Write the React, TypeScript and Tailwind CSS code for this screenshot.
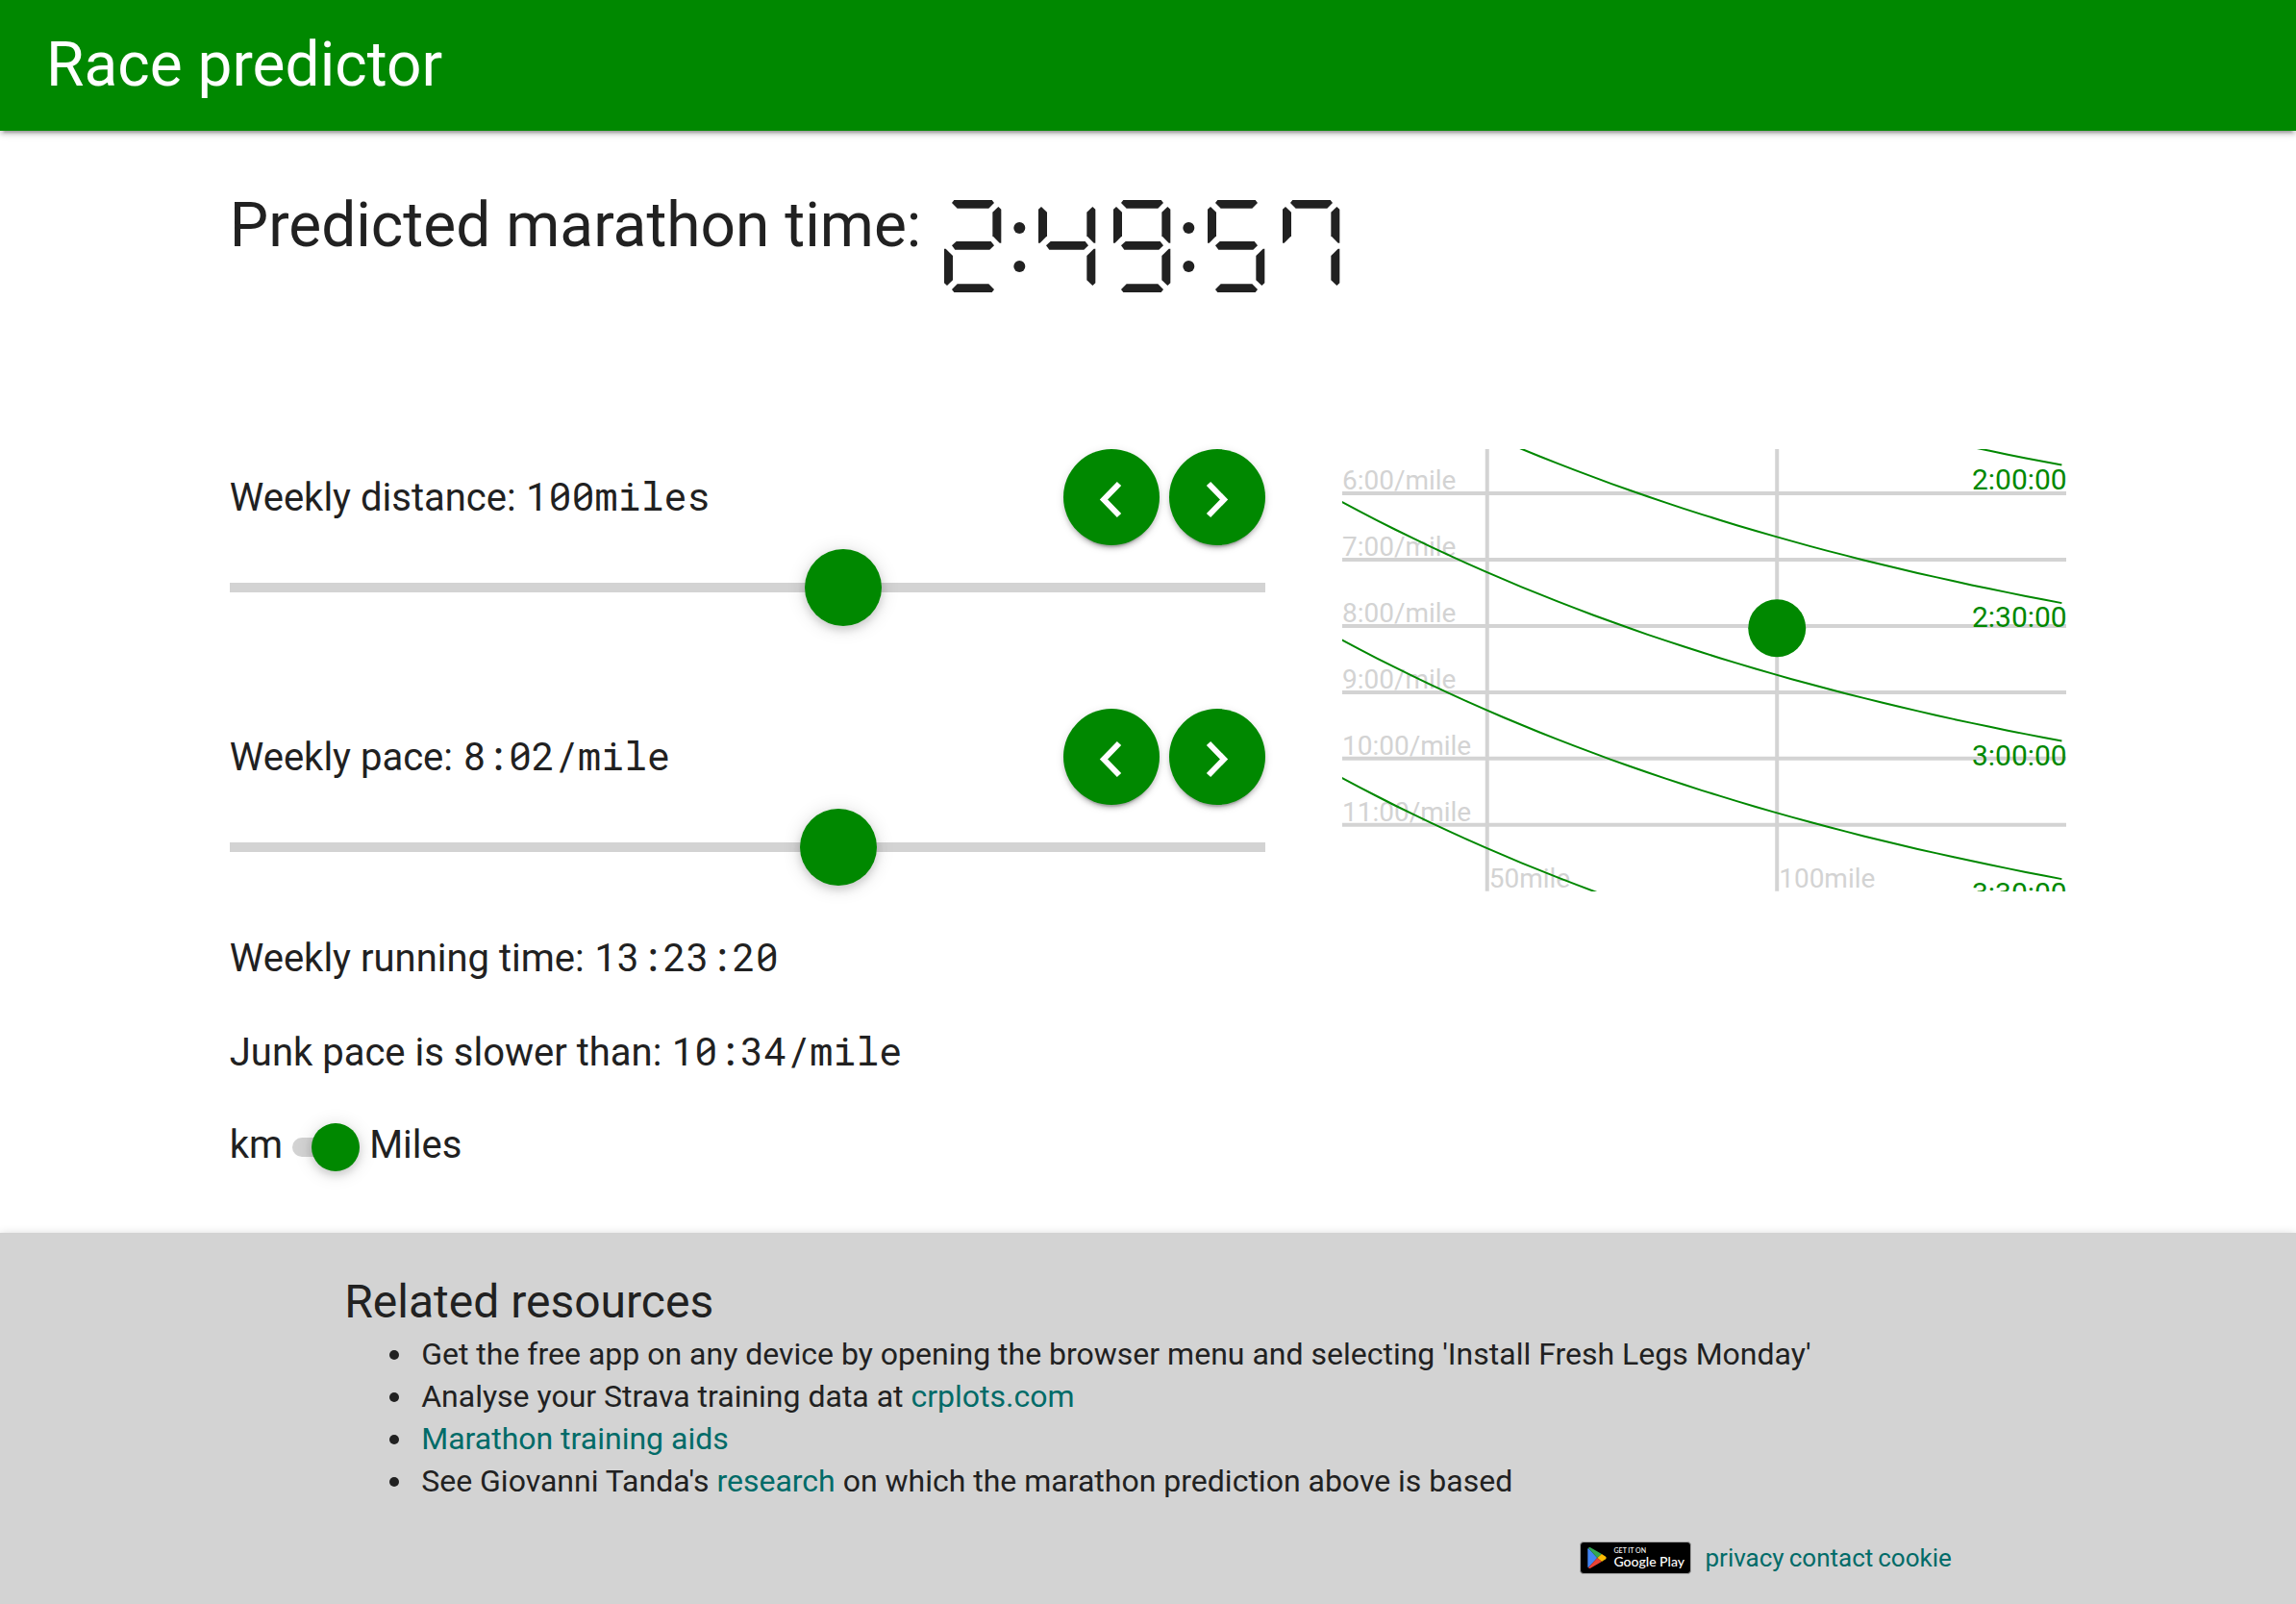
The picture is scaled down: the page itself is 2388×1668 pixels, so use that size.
import React from "react";

const GREEN = "#008800";
const GREY = "#d3d3d3";

/* ---------- Seven-segment clock ---------- */

const SEGMENTS: Record<string, string> = {
  a: "24,9 31,0 149,0 156,9 139,26 41,26",
  b: "169,21 151,38 151,112 173,134 178,134 178,29",
  c: "169,267 151,250 151,174 173,152 178,152 178,259",
  d: "24,279 41,262 139,262 156,279 149,288 31,288",
  e: "9,267 27,250 27,174 5,152 0,152 0,259",
  f: "9,21 27,38 27,112 5,134 0,134 0,29",
  g: "24,142 38,129 146,129 156,142 142,155 34,155",
};

const LIT: Record<string, string> = {
  "0": "abcdef",
  "1": "bc",
  "2": "abged",
  "3": "abgcd",
  "4": "fgbc",
  "5": "afgcd",
  "6": "afgedc",
  "7": "fabc",
  "8": "abcdefg",
  "9": "abcdfg",
};

const DIGIT_ADVANCE = 234;
const COLON_ADVANCE = 60;

function SegmentClock({ value }: { value: string }) {
  let x = 0;
  const parts = value.split("").map((ch, i) => {
    const left = x;
    if (ch === ":") {
      x += COLON_ADVANCE;
      return (
        <g key={i} transform={`translate(${left} 0)`}>
          <circle cx="1" cy="87" r="18" />
          <circle cx="1" cy="207" r="18" />
        </g>
      );
    }
    x += DIGIT_ADVANCE;
    return (
      <g key={i} transform={`translate(${left} 0)`}>
        {LIT[ch].split("").map((s) => (
          <polygon key={s} points={SEGMENTS[s]} />
        ))}
      </g>
    );
  });
  return (
    <svg
      role="img"
      aria-label={value}
      viewBox="0 0 1236 288"
      className="h-24 w-[412px] shrink-0"
      fill="currentColor"
    >
      {parts}
    </svg>
  );
}

/* ---------- Controls ---------- */

function StepButton({ label, d }: { label: string; d: string }) {
  return (
    <button
      type="button"
      aria-label={label}
      className="size-[100px] rounded-full bg-[#008800] text-white shadow-[0_6px_2px_-4px_rgba(0,0,0,0.2),0_4px_4px_0_rgba(0,0,0,0.14),0_2px_10px_0_rgba(0,0,0,0.12)]"
    >
      <svg viewBox="0 0 100 100" className="size-full" fill="none" stroke="currentColor" strokeWidth="6">
        <path d={d} />
      </svg>
    </button>
  );
}

type SliderRowProps = {
  id: string;
  label: string;
  value: string;
  min: number;
  max: number;
  position: number;
};

function SliderRow({ id, label, value, min, max, position }: SliderRowProps) {
  return (
    <div>
      <div className="flex items-center justify-between">
        <label htmlFor={id} className="text-[40px] leading-[56px]">
          {label} <Mono>{value}</Mono>
        </label>
        <div className="flex gap-2.5">
          <StepButton label={`Decrease ${label}`} d="M58 36 L42 52.5 L58 69" />
          <StepButton label={`Increase ${label}`} d="M41 36 L57 52.5 L41 69" />
        </div>
      </div>
      <input
        id={id}
        type="range"
        min={min}
        max={max}
        defaultValue={position}
        className="mt-1 block h-20 w-full appearance-none bg-transparent [&::-webkit-slider-runnable-track]:h-2.5 [&::-webkit-slider-runnable-track]:bg-[#d3d3d3] [&::-webkit-slider-thumb]:-mt-[35px] [&::-webkit-slider-thumb]:size-20 [&::-webkit-slider-thumb]:appearance-none [&::-webkit-slider-thumb]:rounded-full [&::-webkit-slider-thumb]:bg-[#008800] [&::-webkit-slider-thumb]:shadow-[0_4px_8px_0_rgba(0,0,0,0.14),0_2px_20px_0_rgba(0,0,0,0.14)]"
      />
    </div>
  );
}

function Mono({ children }: { children: React.ReactNode }) {
  return <span className="font-['Roboto_Mono','Liberation_Mono',monospace]">{children}</span>;
}

/* ---------- Contour chart ---------- */

const CHART_W = 754;
const CHART_H = 460;
const KM_PER_MILE = 1.60934;

const xOf = (miles: number) => ((miles - 25) / 125) * CHART_W;
const yOf = (secPerMile: number) => ((secPerMile - 320) / 400) * CHART_H;

// Tanda's equation solved for training pace, given a marathon time and weekly distance.
function paceFor(marathonSeconds: number, km: number) {
  const perKm = (marathonSeconds / 42.195 - 17.1 - 140 * Math.exp(-0.0053 * km)) / 0.55;
  return perKm * KM_PER_MILE;
}

function contour(seconds: number) {
  const pts: string[] = [];
  for (let km = 40; km <= 240; km += 5) {
    pts.push(`${xOf(km / KM_PER_MILE).toFixed(1)},${yOf(paceFor(seconds, km)).toFixed(1)}`);
  }
  return pts.join(" ");
}

// The slowest contour ends below the plot, so it carries no label.
const CONTOURS = [
  { label: "2:00:00", s: 7200 },
  { label: "2:30:00", s: 9000 },
  { label: "3:00:00", s: 10800 },
  { label: "3:30:00", s: 12600 },
  { s: 14400 },
];

function Chart() {
  return (
    <svg
      viewBox={`0 0 ${CHART_W} ${CHART_H}`}
      className="block w-full overflow-hidden"
      role="img"
      aria-label="Marathon time by weekly distance and pace"
    >
      {[6, 7, 8, 9, 10, 11].map((m) => (
        <g key={m}>
          <line x1="0" x2={CHART_W} y1={yOf(m * 60)} y2={yOf(m * 60)} stroke={GREY} strokeWidth="4" />
          <text x="0" y={yOf(m * 60) - 4} fontSize="28" fill={GREY}>{`${m}:00/mile`}</text>
        </g>
      ))}
      {[50, 100].map((mi) => (
        <g key={mi}>
          <line x1={xOf(mi)} x2={xOf(mi)} y1="0" y2={CHART_H} stroke={GREY} strokeWidth="4" />
          <text x={xOf(mi) + 2} y={CHART_H - 4} fontSize="28" fill={GREY}>{`${mi}mile`}</text>
        </g>
      ))}
      {CONTOURS.map((c) => (
        <g key={c.s}>
          <polyline points={contour(c.s)} fill="none" stroke={GREEN} strokeWidth="2" />
          {c.label && (
            <text
              x={CHART_W}
              y={yOf(paceFor(c.s, 240)) + 25}
              fontSize="30"
              fill={GREEN}
              textAnchor="end"
            >
              {c.label}
            </text>
          )}
        </g>
      ))}
      <circle cx={xOf(100)} cy={yOf(482)} r="30" fill={GREEN} />
    </svg>
  );
}

/* ---------- Footer ---------- */

function PlayBadge() {
  return (
    <a
      href="#play"
      aria-label="Get it on Google Play"
      className="flex h-[34px] w-[116px] items-center gap-[7px] rounded-[4px] border border-[#a6a6a6] bg-black pl-[7px] text-white"
    >
      <svg viewBox="0 0 60 68" className="h-[22px] w-5 shrink-0">
        <path d="M2 2 Q0 4 0 7 V61 Q0 64 2 66 L31 34 Z" fill="#4285f4" />
        <path d="M2 2 Q5 -1 9 1 L45 22 L31 34 Z" fill="#34a853" />
        <path d="M45 22 L57 29 Q63 34 57 39 L45 46 L31 34 Z" fill="#fbbc04" />
        <path d="M2 66 Q5 69 9 67 L45 46 L31 34 Z" fill="#ea4335" />
      </svg>
      <span className="flex flex-col font-[Lato,sans-serif] font-medium">
        <span className="text-[7px] leading-[8px]">GET IT ON</span>
        <span className="text-[14px] leading-[16px] whitespace-nowrap">Google Play</span>
      </span>
    </a>
  );
}

const link = "text-[#006b68]";

export default function App() {
  return (
    <div className="flex min-h-screen flex-col bg-white font-[Roboto,sans-serif] text-[#212121]">
      <header className="flex h-[136px] items-center bg-[#008800] px-12 shadow-[0_6px_2px_-4px_rgba(0,0,0,0.2),0_4px_4px_0_rgba(0,0,0,0.14),0_2px_10px_0_rgba(0,0,0,0.12)]">
        <h1 className="text-[64px] leading-[80px] text-white">Race predictor</h1>
      </header>

      <main className="px-[10%] pt-[72px] pb-[63px]">
        <div className="flex items-start gap-6">
          <h2 className="-mt-[15px] text-[64px] leading-[84px]">Predicted marathon time:</h2>
          <SegmentClock value="2:49:57" />
        </div>

        <div className="mt-[163px] grid grid-cols-[10fr_7fr] items-start gap-20">
          <section>
            <div className="flex flex-col gap-[86px]">
              <SliderRow id="distance" label="Weekly distance:" value="100miles" min={25} max={150} position={100} />
              <SliderRow id="pace" label="Weekly pace:" value="8:02/mile" min={320} max={720} position={558} />
            </div>
            <div className="mt-[46px] flex flex-col gap-10 text-[40px] leading-[56px]">
              <p>
                Weekly running time: <Mono>13:23:20</Mono>
              </p>
              <p>
                Junk pace is slower than: <Mono>10:34/mile</Mono>
              </p>
              <div className="flex items-center gap-2.5">
                <span>km</span>
                <input
                  type="checkbox"
                  role="switch"
                  aria-label="Use miles"
                  defaultChecked
                  className="relative mt-1 h-5 w-[70px] appearance-none rounded-full bg-[#d3d3d3] before:absolute before:-top-[15px] before:left-0 before:size-[50px] before:rounded-full before:bg-[#008800] before:shadow-[0_4px_8px_0_rgba(0,0,0,0.14),0_2px_20px_0_rgba(0,0,0,0.14)] checked:before:left-5"
                />
                <span>Miles</span>
              </div>
            </div>
          </section>
          <Chart />
        </div>
      </main>

      <footer className="flex-1 bg-[#d3d3d3] px-[15%] pt-10 pb-5 shadow-[0_2px_10px_0_rgba(0,0,0,0.2)]">
        <h2 className="text-[48px] leading-[64px]">Related resources</h2>
        <ul className="list-disc pl-[74px] text-[32px] leading-[44px] [&>li]:pl-1.5">
          <li>Get the free app on any device by opening the browser menu and selecting 'Install Fresh Legs Monday'</li>
          <li>
            Analyse your Strava training data at <a href="#crplots" className={link}>crplots.com</a>
          </li>
          <li>
            <a href="#aids" className={link}>Marathon training aids</a>
          </li>
          <li>
            See Giovanni Tanda's <a href="#research" className={link}>research</a> on which the marathon prediction
            above is based
          </li>
        </ul>
        <div className="mt-10 flex items-center justify-end gap-3.5">
          <PlayBadge />
          <nav className="flex gap-[5px] text-[26px] leading-[36px]">
            <a href="#privacy" className={link}>privacy</a>
            <a href="#contact" className={link}>contact</a>
            <a href="#cookie" className={link}>cookie</a>
          </nav>
        </div>
      </footer>
    </div>
  );
}
